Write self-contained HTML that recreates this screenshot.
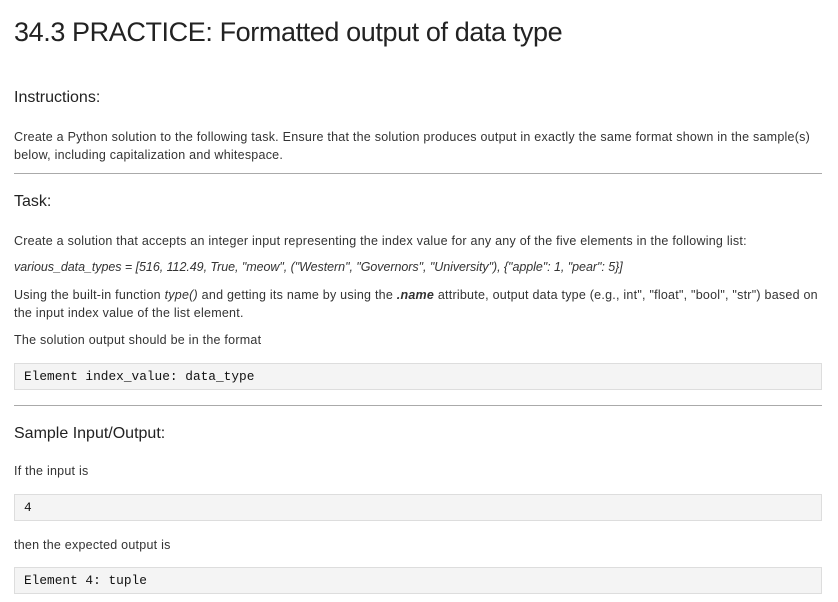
<!DOCTYPE html><html><head><style>
body{margin:0;width:838px;height:602px;background:#fff;font-family:"Liberation Sans",sans-serif;color:#333;position:relative;overflow:hidden}
.a{position:absolute;left:14px;white-space:nowrap;font-size:12.5px;line-height:18px;letter-spacing:0.24px}
h1{position:absolute;left:14px;top:17px;margin:0;font-weight:normal;font-size:27px;color:#222;letter-spacing:-0.4px}
.h{position:absolute;left:14px;margin:0;font-weight:normal;font-size:16px;color:#222}
.hr{position:absolute;left:14px;width:808px;height:1px;background:#aaa}
.c{position:absolute;left:14px;background:#f4f4f4;border:1px solid #ddd;font-family:"Liberation Mono",monospace;font-size:12.8px;line-height:25px;padding-left:9px;box-sizing:border-box;width:808px;height:27px;color:#111}
i{font-style:italic}
</style></head><body>
<h1>34.3 PRACTICE: Formatted output of data type</h1>
<div class="h" style="top:89px">Instructions:</div>
<div class="a" style="top:128px">Create a Python solution to the following task. Ensure that the solution produces output in exactly the same format shown in the sample(s)<br>below, including capitalization and whitespace.</div>
<div class="hr" style="top:173px"></div>
<div class="h" style="top:193px">Task:</div>
<div class="a" style="top:232px">Create a solution that accepts an integer input representing the index value for any any of the five elements in the following list:</div>
<div class="a" style="top:258px;letter-spacing:-0.05px"><i>various_data_types = [516, 112.49, True, "meow", ("Western", "Governors", "University"), {"apple": 1, "pear": 5}]</i></div>
<div class="a" style="top:286px">Using the built-in function <i>type()</i> and getting its name by using the <i><b>.name</b></i> attribute, output data type (e.g., int", "float", "bool", "str") based on<br>the input index value of the list element.</div>
<div class="a" style="top:331px">The solution output should be in the format</div>
<div class="c" style="top:363px">Element index_value: data_type</div>
<div class="hr" style="top:405px"></div>
<div class="h" style="top:425px">Sample Input/Output:</div>
<div class="a" style="top:462px">If the input is</div>
<div class="c" style="top:494px">4</div>
<div class="a" style="top:536px">then the expected output is</div>
<div class="c" style="top:567px">Element 4: tuple</div>
</body></html>
